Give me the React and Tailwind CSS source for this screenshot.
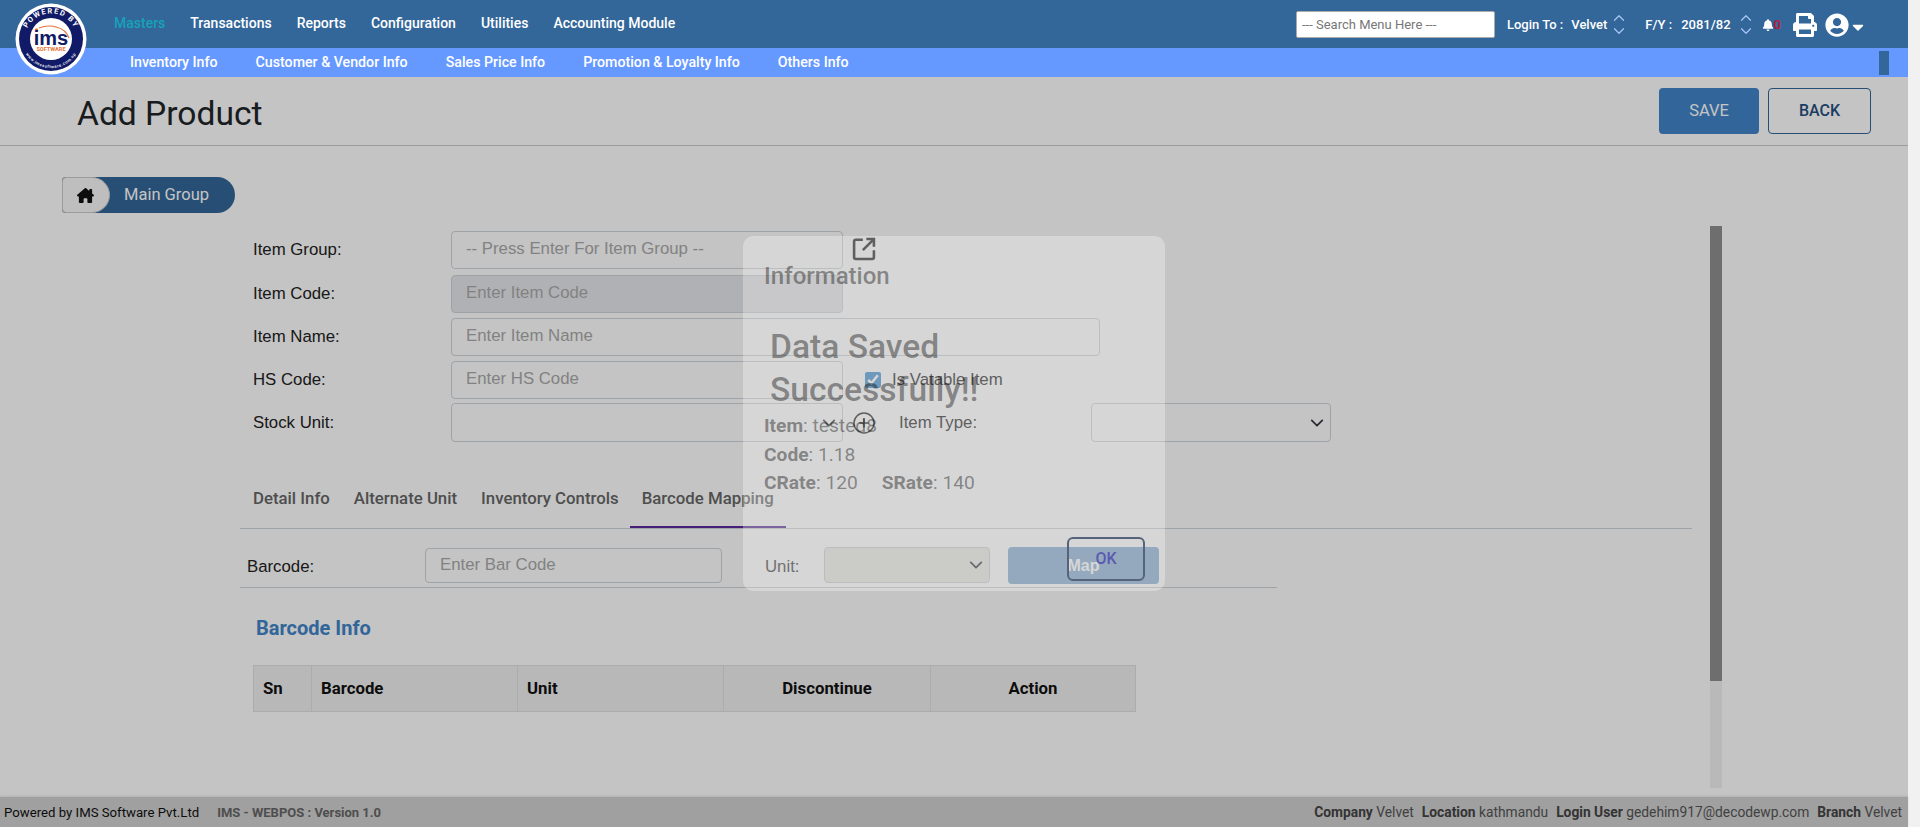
import React from "react";
import { FaBell, FaPrint, FaUserCircle, FaCaretDown } from "react-icons/fa";
import { FaHouseChimney } from "react-icons/fa6";
import { ChevronUp, ChevronDown, CirclePlus } from "lucide-react";

const Logo = () => (
  <svg width="72" height="72" viewBox="0 0 72 72" className="absolute left-[15px] top-[3px]">
    <defs>
      <path id="arcTop" d="M10 42 A26.500 26.500 0 1 1 62 42" />
      <path id="arcBot" d="M7 41 A29.500 29.500 0 0 0 65 41" />
    </defs>
    <circle cx="36" cy="36" r="35.500" fill="#fff" />
    <circle cx="36" cy="36" r="32" fill="#101a66" />
    <circle cx="36" cy="36" r="21" fill="#fff" />
    <text fill="#fff" fontSize="7.400" fontWeight="700" letterSpacing="1.400" fontFamily="Roboto, sans-serif">
      <textPath href="#arcTop" startOffset="50%" textAnchor="middle">POWERED BY</textPath>
    </text>
    <text fill="#fff" fontSize="4.200" letterSpacing="0.500" fontFamily="Roboto, sans-serif">
      <textPath href="#arcBot" startOffset="50%" textAnchor="middle">www.imssoftware.com.np</textPath>
    </text>
    <path d="M24 25 C34 21 50 23 54 35" fill="none" stroke="#e8743b" strokeWidth="1.100" />
    <circle cx="21.500" cy="27" r="1.700" fill="#e8743b" />
    <text x="36" y="41.500" textAnchor="middle" fill="#101a66" fontSize="20" fontWeight="700" fontFamily="'Liberation Sans', sans-serif">ims</text>
    <text x="36" y="48" textAnchor="middle" fill="#e8743b" fontSize="5.600" fontWeight="700" fontFamily="Roboto, sans-serif">SOFTWARE</text>
  </svg>
);

const Updown = () => (
  <span className="flex flex-col w-[16px] items-center text-[#a9c6f5] -my-1">
    <ChevronUp size={18} strokeWidth={1.6} className="-mb-[5px]" />
    <ChevronDown size={18} strokeWidth={1.6} />
  </span>
);

const Chevron = ({ className = "" }) => (
  <svg viewBox="0 0 16 16" width="14" height="14" className={"absolute top-1/2 -translate-y-1/2 pointer-events-none " + className}>
    <path d="M2 5l6 6 6-6" fill="none" stroke="#343a40" strokeWidth="2" strokeLinecap="round" strokeLinejoin="round" />
  </svg>
);

const inputCls =
  "h-[38px] rounded-[4px] border border-[#ced4da] bg-white px-[14px] pb-[2px] text-[16.8px] outline-none placeholder:text-[#aaa]";

const Label = ({ children }) => <label className="w-[198px] shrink-0 text-[16.8px] text-[#222]">{children}</label>;

const Select = ({ w, bg = "bg-white", h = "h-[39px]" }) => (
  <div className={"relative " + w}>
    <select className={"w-full rounded-[4px] border border-[#ced4da] appearance-none " + h + " " + bg}></select>
    <Chevron className="right-[7px]" />
  </div>
);

export default function App() {
  return (
    <div className="relative flex h-[827px] w-full overflow-hidden bg-[#f1f1f1] font-['Roboto',sans-serif]">
      <div className="flex w-[1908px] shrink-0 flex-col bg-white">
        <header className="relative z-20 h-[77px] shrink-0 text-[14px] font-medium text-white">
          <Logo />
          <div className="flex h-[48px] items-center bg-[#336699] pl-[114px]">
            <nav className="flex gap-[25px] -mt-[2px]">
              <span className="text-[#17a2b8]">Masters</span>
              <span>Transactions</span>
              <span>Reports</span>
              <span>Configuration</span>
              <span>Utilities</span>
              <span>Accounting Module</span>
            </nav>
            <div className="ml-auto flex items-center pr-[41px] pt-[1px] text-[13px]">
              <input
                placeholder="--- Search Menu Here ---"
                className="h-[27px] w-[199px] rounded-[2px] border border-[#aaa] bg-white px-[5px] text-[13px] font-normal outline-none placeholder:text-[#777]"
              />
              <span className="ml-[12px]">Login To :</span>
              <span className="ml-[8px]">Velvet</span>
              <span className="ml-[4px]"><Updown /></span>
              <span className="ml-[18px]">F/Y :</span>
              <span className="ml-[9px]">2081/82</span>
              <span className="ml-[7px]"><Updown /></span>
              <FaBell size={12} className="ml-[8px]" />
              <span className="text-[#c8102e]">0</span>
              <FaPrint size={24} className="ml-[12px]" />
              <FaUserCircle size={24} className="ml-[8px]" />
              <FaCaretDown size={18} className="mt-[4px]" />
            </div>
          </div>
          <div className="flex h-[29px] items-center bg-[#6699ff] pl-[130px] pr-[19px]">
            <nav className="flex gap-[38px] pt-[1px] text-[14.2px]">
              <span>Inventory Info</span>
              <span>Customer &amp; Vendor Info</span>
              <span>Sales Price Info</span>
              <span>Promotion &amp; Loyalty Info</span>
              <span>Others Info</span>
            </nav>
            <span className="ml-auto h-[24px] w-[10px] bg-[#336699]"></span>
          </div>
        </header>

        <div className="flex h-[69px] shrink-0 items-center border-b border-[#ccc] pl-[77px] pr-[37px]">
          <h1 className="mt-[6px] text-[33.6px] font-normal text-[#212529]">Add Product</h1>
          <button className="ml-auto h-[46px] w-[100px] rounded-[4px] bg-[#4284c7] text-[16.5px] text-white">SAVE</button>
          <button className="ml-[9px] h-[46px] w-[103px] rounded-[4px] border border-[#336699] text-[16px] font-medium text-[#264f7f]">BACK</button>
        </div>

        <main className="flex min-h-0 flex-1 flex-col">
          <div className="ml-[62px] mt-[31px] flex h-[36px] w-[173px] items-center rounded-r-[18px] rounded-l-[4px] bg-[#336699]">
            <span className="flex h-[36px] w-[48px] items-center justify-center rounded-r-[18px] rounded-l-[4px] border border-[#ccc] bg-[#f7f7f7] pr-[1px]">
              <FaHouseChimney size={17} className="text-[#111]" />
            </span>
            <span className="ml-[14px] pt-[1px] text-[16.5px] text-white">Main Group</span>
          </div>

          <div className="ml-[240px] mt-[13px] flex flex-1 min-h-0">
            <div className="w-[1452px] shrink-0">
              <div className="pl-[13px] pt-[5px] font-['Liberation_Sans',sans-serif]">
                <div className="flex items-center">
                  <Label>Item Group:</Label>
                  <input placeholder="-- Press Enter For Item Group --" className={inputCls + " w-[392px]"} />
                  <svg viewBox="0 0 24 24" width="28" height="28" className="ml-[7px] -mt-[2px]" fill="none" stroke="#222" strokeWidth="2.200">
                    <path d="M11 4H5a1.500 1.500 0 0 0-1.500 1.500v13.500A1.500 1.500 0 0 0 5 20.500h14a1.500 1.500 0 0 0 1.500-1.500v-6" />
                    <path d="M14 3.500h6.500V10M20.500 3.500L11 13" />
                  </svg>
                </div>
                <div className="mt-[6px] flex items-center">
                  <Label>Item Code:</Label>
                  <input placeholder="Enter Item Code" className={inputCls + " w-[392px] !bg-[#e6e7eb]"} />
                </div>
                <div className="mt-[5px] flex items-center">
                  <Label>Item Name:</Label>
                  <input placeholder="Enter Item Name" className={inputCls + " w-[649px]"} />
                </div>
                <div className="mt-[5px] flex items-center">
                  <Label>HS Code:</Label>
                  <input placeholder="Enter HS Code" className={inputCls + " w-[392px]"} />
                  <input type="checkbox" defaultChecked className="ml-[22px] h-[16px] w-[16px] accent-[#3b8ed0]" />
                  <span className="ml-[11px] text-[16.8px] text-[#222]">Is Vatable Item</span>
                </div>
                <div className="mt-[4px] flex items-center">
                  <Label>Stock Unit:</Label>
                  <Select w="w-[392px]" />
                  <CirclePlus size={24} strokeWidth={1.5} className="ml-[9px] text-[#222]" />
                  <span className="ml-[23px] w-[192px] text-[16.8px] text-[#222]">Item Type:</span>
                  <Select w="w-[240px]" />
                </div>
              </div>

              <div className="mt-[27px] flex h-[60px] items-center border-b border-[#ced4da] pl-[13px] pt-[1px] text-[16.8px] font-medium text-[#666]">
                <span>Detail Info</span>
                <span className="ml-[24px]">Alternate Unit</span>
                <span className="ml-[24px]">Inventory Controls</span>
                <span className="ml-[11px] flex h-full w-[156px] items-center justify-center border-b-[2px] border-[#5b2a9d] pt-[2px]">Barcode Mapping</span>
              </div>

              <div className="flex h-[59px] w-[1037px] items-center border-b border-[#ced4da] pl-[7px] pt-[14px] font-['Liberation_Sans',sans-serif]">
                <span className="w-[178px] pt-[3px] text-[16.8px] text-[#222]">Barcode:</span>
                <input placeholder="Enter Bar Code" className="h-[35px] w-[297px] rounded-[4px] border border-[#ced4da] bg-white px-[14px] text-[16.8px] outline-none placeholder:text-[#aaa]" />
                <span className="ml-[43px] w-[59px] pt-[3px] text-[16.8px] text-[#444]">Unit:</span>
                <Select w="w-[166px]" bg="bg-[#ecede7]" h="h-[36px]" />
                <button className="ml-[18px] h-[37px] w-[151px] rounded-[4px] bg-[#85aed4] pt-[1px] text-[16px] font-bold text-white">Map</button>
              </div>

              <h2 className="ml-[16px] mt-[28px] text-[20px] font-bold leading-[24px] text-[#4284c7]">Barcode Info</h2>

              <table className="ml-[13px] mt-[25px] table-fixed border-collapse text-[16.8px] font-bold text-[#111]">
                <thead>
                  <tr className="h-[46px] bg-[#f0f0f0]">
                    <th className="w-[58px] border border-[#dee2e6] pl-[9px] text-left font-bold">Sn</th>
                    <th className="w-[206px] border border-[#dee2e6] pl-[9px] text-left font-bold">Barcode</th>
                    <th className="w-[206px] border border-[#dee2e6] pl-[9px] text-left font-bold">Unit</th>
                    <th className="w-[207px] border border-[#dee2e6] text-center font-bold">Discontinue</th>
                    <th className="w-[205px] border border-[#dee2e6] text-center font-bold">Action</th>
                  </tr>
                </thead>
              </table>
            </div>
            <div className="ml-[18px] mb-[9px] flex w-[12px] flex-col bg-[#f1f1f1]">
              <div className="h-[455px] bg-[#8f8f8f]"></div>
            </div>
          </div>
        </main>

        <footer className="flex h-[30px] shrink-0 items-center justify-between bg-[#d0d0d0] pl-[4px] pr-[6px] pt-[1px] shadow-[0_-1px_2px_rgba(0,0,0,0.1)]">
          <div className="text-[13px]">
            <span className="text-[13.2px] text-[#111]">Powered by IMS Software Pvt.Ltd</span>
            <span className="ml-[18px] font-bold text-[#666]">IMS - WEBPOS : Version 1.0</span>
          </div>
          <div className="text-[13.8px] text-[#555]">
            <b className="text-[#444]">Company</b> Velvet
            <b className="ml-[8px] text-[#444]">Location</b> kathmandu
            <b className="ml-[8px] text-[#444]">Login User</b> gedehim917@decodewp.com
            <b className="ml-[8px] text-[#444]">Branch</b> Velvet
          </div>
        </footer>
      </div>

      {/* dim backdrop + dialog */}
      <div className="absolute left-0 top-[77px] bottom-0 z-10 w-[1908px] bg-black/[0.23]">
        <div className="absolute left-[743px] top-[159px] h-[355px] w-[422px] rounded-[10px] bg-white/30 text-black/40">
          <div className="pl-[21px] pt-[26px] text-[24px] font-medium leading-[28px]">Information</div>
          <div className="ml-[27px] mt-[35px] w-[300px] text-[33.6px] font-medium leading-[43px]">Data Saved Successfully!!</div>
          <div className="ml-[21px] mt-[1px] text-[19.2px] leading-[28.500px]">
            <div><b className="font-bold">Item</b>: tested8</div>
            <div><b className="font-bold">Code</b>: 1.18</div>
            <div><b className="font-bold">CRate</b>: 120<b className="ml-[24px] font-bold">SRate</b>: 140</div>
          </div>
          <button className="absolute left-[324px] top-[301px] h-[44px] w-[78px] rounded-[6px] border-2 border-[#55647a] text-[16px] font-medium text-[#5a5ab0]">OK</button>
        </div>
      </div>
    </div>
  );
}
